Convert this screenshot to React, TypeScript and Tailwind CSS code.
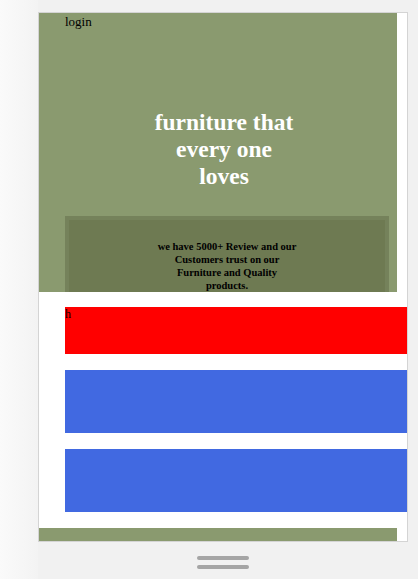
import React from "react";

const serif = { fontFamily: '"Liberation Serif", "Times New Roman", serif' };

const Hero = () => {
  return (
    <div className="h-[279px] w-[358px] shrink-0 overflow-hidden bg-[#8a9a6f]">
      <div className="pl-[26px] pt-[1px] text-[13px] leading-[15px] text-black">
        login
      </div>
      <div className="flex justify-center pl-[26px] pr-[14px] pt-[80px]">
        <h1 className="w-[150px] text-center text-[23.5px] font-bold leading-[27px] text-white">
          furniture that every one loves
        </h1>
      </div>
      <div className="ml-[26px] mt-[26px] h-[90px] w-[324px] border-4 border-[#75825b] bg-[#6e7a52] pt-[20px]">
        <p className="mx-auto w-[142px] text-center text-[10.5px] font-bold leading-[13px] text-black">
          we have 5000+ Review and our Customers trust on our Furniture and
          Quality products.
        </p>
      </div>
    </div>
  );
};

export default function App() {
  return (
    <div
      className="relative h-[579px] w-[418px] overflow-hidden bg-[#f1f1f1]"
      style={serif}
    >
      <div className="absolute inset-y-0 left-0 w-[38px] bg-gradient-to-r from-[#fafafa] to-[#f3f3f3]" />
      <div className="relative ml-[38px] mt-[12px] flex h-[530px] w-[370px] flex-col overflow-hidden border border-[#d4d4d4] bg-white">
        <Hero />
        <div className="flex w-[358px] flex-col gap-[16px] pt-[15px]">
          <div className="ml-[26px] h-[47px] w-full shrink-0 bg-[#ff0000] text-[12px] leading-[14px] text-black">
            h
          </div>
          <div className="ml-[26px] h-[63px] w-full shrink-0 bg-[#4169e1]" />
          <div className="ml-[26px] h-[63px] w-full shrink-0 bg-[#4169e1]" />
          <div className="h-[40px] w-full shrink-0 bg-[#8a9a6f]" />
        </div>
      </div>
      <div className="ml-[38px] flex w-[370px] flex-col items-center pt-[14px]">
        <div className="h-[4px] w-[52px] rounded-full bg-[#a5a5a5]" />
        <div className="mt-[5px] h-[4px] w-[52px] rounded-full bg-[#a5a5a5]" />
      </div>
    </div>
  );
}
